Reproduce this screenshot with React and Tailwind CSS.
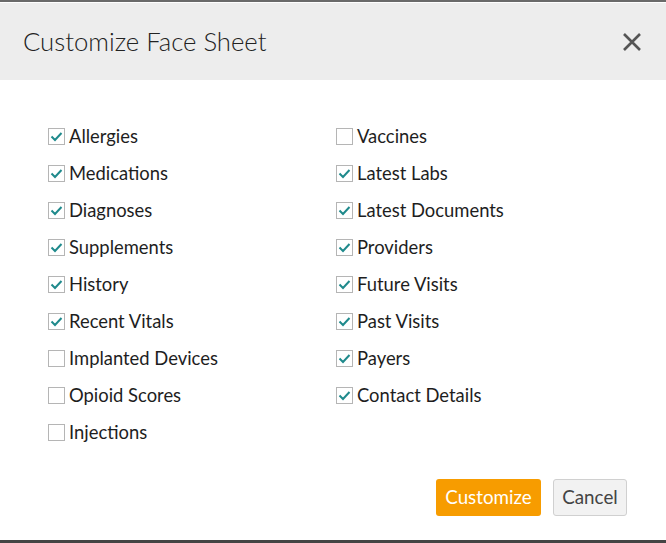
import React from "react";

const left = [
  ["Allergies", true],
  ["Medications", true],
  ["Diagnoses", true],
  ["Supplements", true],
  ["History", true],
  ["Recent Vitals", true],
  ["Implanted Devices", false],
  ["Opioid Scores", false],
  ["Injections", false],
];
const right = [
  ["Vaccines", false],
  ["Latest Labs", true],
  ["Latest Documents", true],
  ["Providers", true],
  ["Future Visits", true],
  ["Past Visits", true],
  ["Payers", true],
  ["Contact Details", true],
];

function Row({ label, checked }) {
  return (
    <div className="h-[37px] flex items-center">
      <div className="w-[17px] h-[17px] border border-[#b5b5b5] bg-white flex items-center justify-center shrink-0">
        {checked && (
          <svg width="13" height="11" viewBox="0 0 13 11">
            <polyline points="1.5,5.5 5,9 11.5,2" fill="none" stroke="#1f8a8c" strokeWidth="2" />
          </svg>
        )}
      </div>
      <span className="ml-[4px] text-[18.4px] text-[#1e1e1e]">{label}</span>
    </div>
  );
}

export default function App() {
  return (
    <div
      className="w-[666px] h-[543px] bg-white flex flex-col border-t-[2px] border-b-[3px] border-t-[#6a6a6a] border-b-[#444]"
      style={{ fontFamily: "Lato, 'Open Sans', sans-serif" }}
    >
      <div className="h-[77px] mt-[1px] bg-[#ededed] flex items-center justify-between pl-[23px] pr-[24px] shrink-0">
        <span className="text-[25.7px] font-light text-[#222]">Customize Face Sheet</span>
        <svg width="20" height="20" viewBox="0 0 20 20">
          <path d="M2 2L18 18M18 2L2 18" stroke="#555" strokeWidth="2.6" />
        </svg>
      </div>
      <div className="pl-[48px] pt-[38px] grid grid-cols-[288px_1fr]">
        <div className="flex flex-col">
          {left.map(([l, c]) => (
            <Row key={l} label={l} checked={c} />
          ))}
        </div>
        <div className="flex flex-col">
          {right.map(([l, c]) => (
            <Row key={l} label={l} checked={c} />
          ))}
        </div>
      </div>
      <div className="flex justify-end gap-[12px] pr-[39px] pt-[28px]">
        <button className="h-[37px] w-[105px] rounded-[3px] bg-[#f79c00] text-white text-[18.8px]">Customize</button>
        <button className="h-[37px] w-[74px] rounded-[3px] bg-[#f2f2f2] border border-[#d0d0d0] text-[#444] text-[18.8px]">Cancel</button>
      </div>
    </div>
  );
}
